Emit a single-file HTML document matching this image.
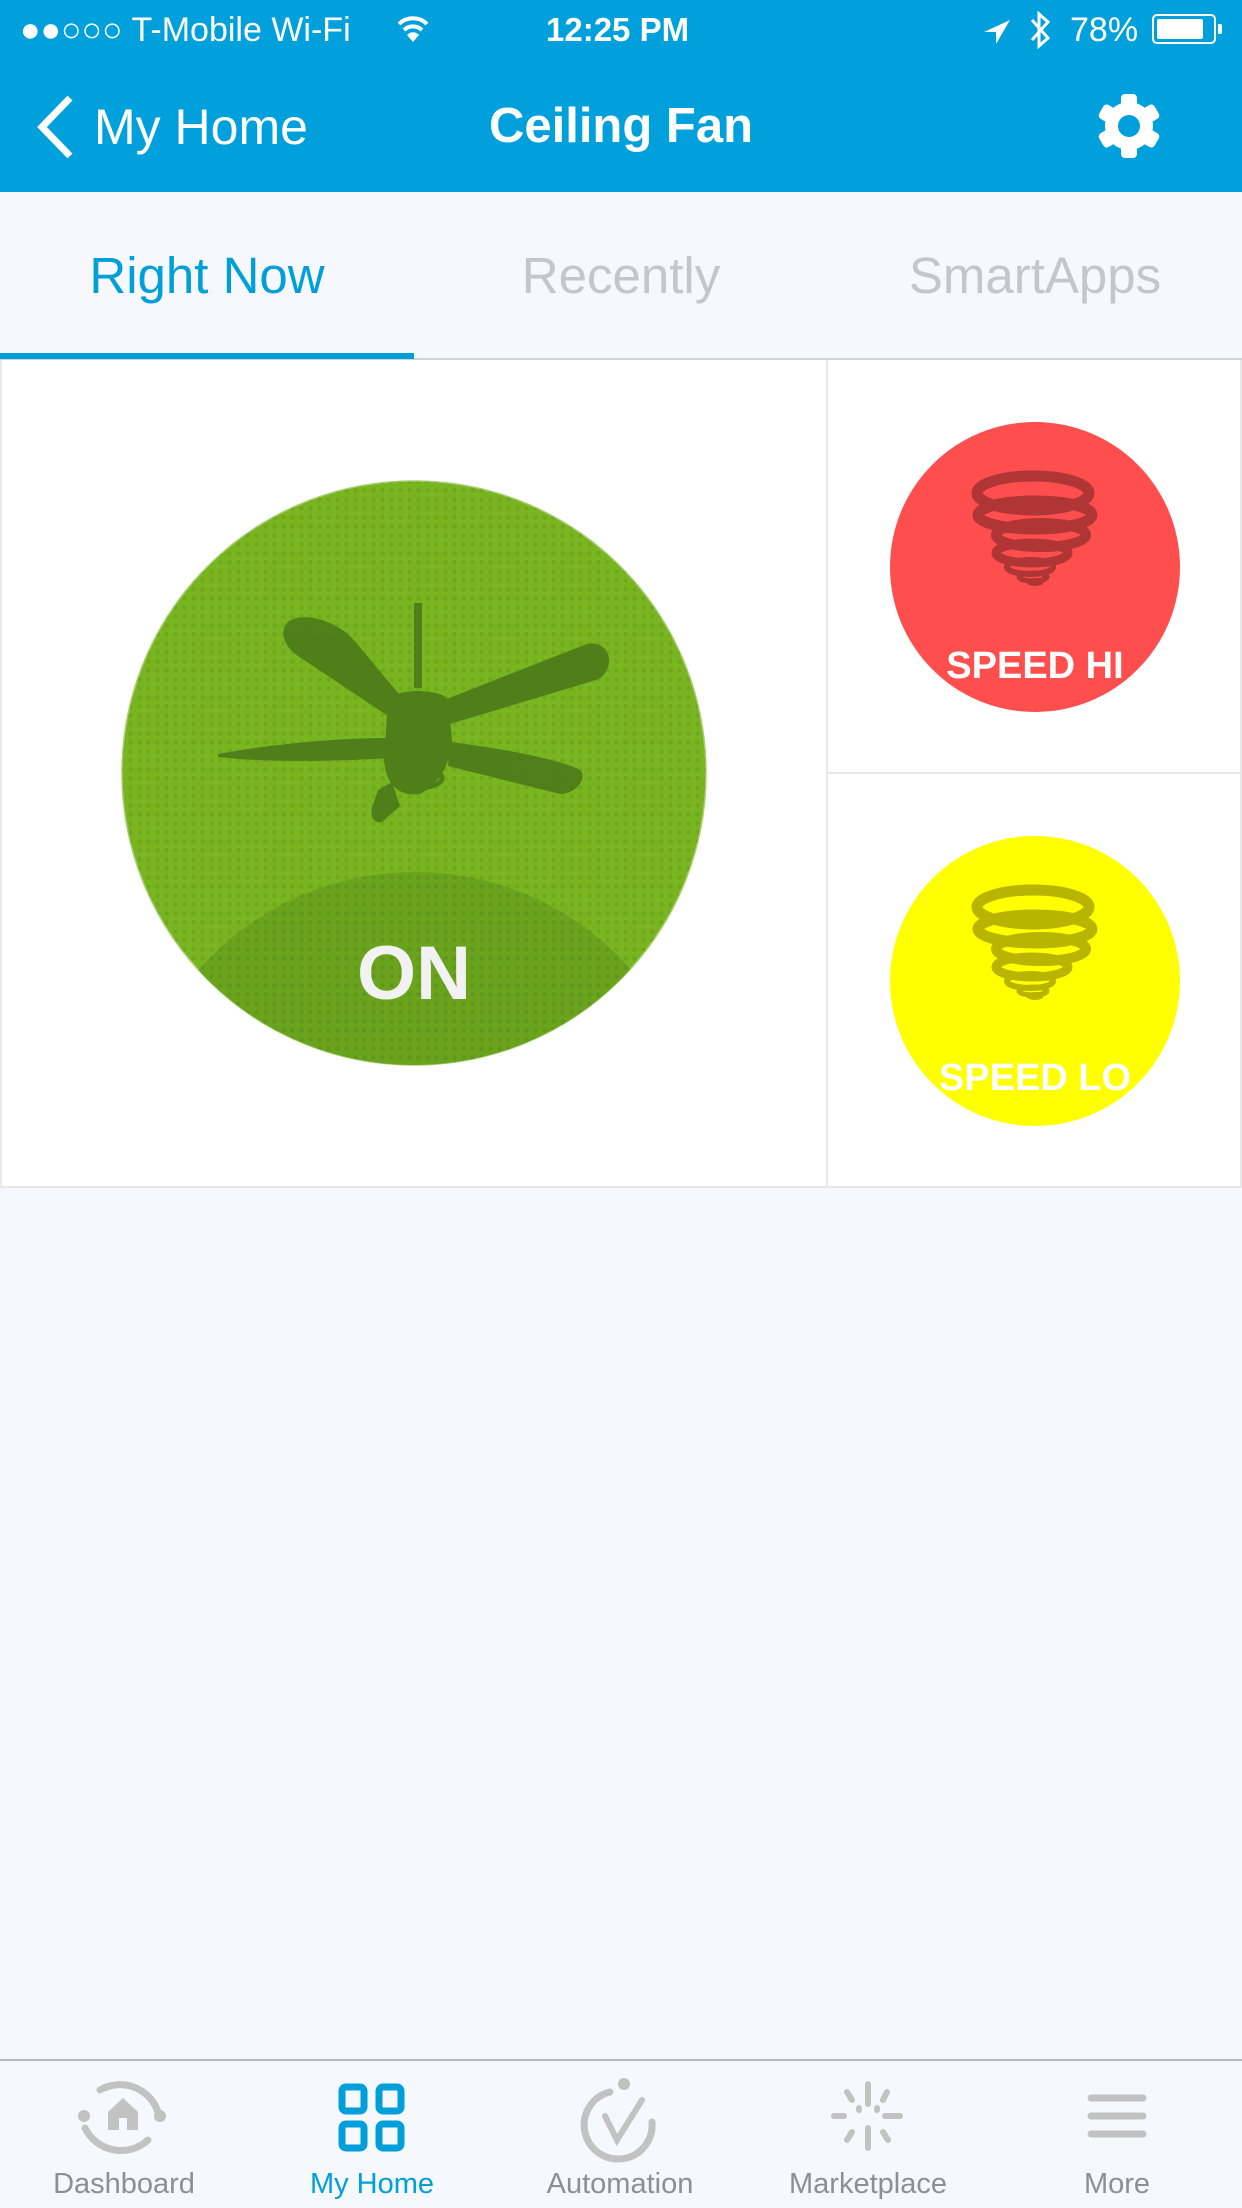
<!DOCTYPE html>
<html><head><meta charset="utf-8">
<style>
*{margin:0;padding:0;box-sizing:border-box}
body{width:1242px;height:2208px;overflow:hidden;background:#f6f8fd;font-family:"Liberation Sans",sans-serif;position:relative}
.abs{position:absolute}
.top{left:0;top:0;width:1242px;height:192px;background:#00a0dc;color:#fff}
.st{font-size:34px;top:11px;white-space:nowrap}
.tab{top:246px;width:414px;text-align:center;font-size:51px;color:#c4c6ca}
.lbl{top:2168px;width:248px;text-align:center;font-size:29px;color:#8e8e93}
</style></head><body>
<div class="abs top">
  <div class="abs st" style="left:20px">●●○○○ T-Mobile Wi-Fi</div>
  <svg class="abs" style="left:396px;top:14px" width="34" height="32" viewBox="0 0 34 32"><path d="M3 10 A20 20 0 0 1 31 10" stroke="#fff" stroke-width="4" fill="none"/><path d="M8 16 A13 13 0 0 1 26 16" stroke="#fff" stroke-width="4" fill="none"/><path d="M17 28 L11 21 A8 8 0 0 1 23 21 Z" fill="#fff"/></svg>
  <div class="abs st" style="left:546px;font-weight:bold;font-size:33px">12:25 PM</div>
  <svg class="abs" style="left:982px;top:18px" width="30" height="28" viewBox="0 0 30 28"><path d="M28 2 L2 14 L14 14 L14 26 Z" fill="#fff"/></svg>
  <svg class="abs" style="left:1028px;top:10px" width="24" height="40" viewBox="0 0 24 40"><path d="M4 10 L20 28 L11 36 L11 4 L20 12 L4 30" stroke="#fff" stroke-width="3" fill="none"/></svg>
  <div class="abs st" style="left:1070px">78%</div>
  <div class="abs" style="left:1152px;top:14px;width:64px;height:30px;border:2px solid #fff;border-radius:5px"><div style="margin:3px;width:46px;height:20px;background:#fff;border-radius:2px"></div></div>
  <div class="abs" style="left:1218px;top:24px;width:4px;height:10px;background:#fff;border-radius:0 2px 2px 0"></div>
  <svg class="abs" style="left:34px;top:94px" width="44" height="66" viewBox="0 0 44 66"><path d="M36 4 L8 33 L36 62" stroke="#fff" stroke-width="7" fill="none"/></svg>
  <div class="abs" style="left:94px;top:98px;font-size:50px">My Home</div>
  <div class="abs" style="left:0;width:1242px;text-align:center;top:98px;font-size:49px;font-weight:bold">Ceiling Fan</div>
  <svg class="abs" style="left:1096px;top:93px" width="66" height="66" viewBox="-33 -33 66 66">
    <g fill="#fff"><circle r="24"/>
    <rect x="-8" y="-32" width="16" height="64" rx="4"/>
    <rect x="-8" y="-32" width="16" height="64" rx="4" transform="rotate(60)"/>
    <rect x="-8" y="-32" width="16" height="64" rx="4" transform="rotate(120)"/></g>
    <circle r="11" fill="#00a0dc"/>
  </svg>
</div>
<div class="abs tab" style="left:0;color:#009fda">Right Now</div>
<div class="abs tab" style="left:414px">Recently</div>
<div class="abs tab" style="left:828px">SmartApps</div>
<div class="abs" style="left:0;top:358px;width:1242px;height:2px;background:#d0d3da"></div>
<div class="abs" style="left:0;top:353px;width:414px;height:6px;background:#009fda"></div>

<div class="abs" style="left:0;top:360px;width:1242px;height:828px;background:#fff;border:2px solid #e8e8ea;border-top:none"></div>
<div class="abs" style="left:826px;top:360px;width:2px;height:828px;background:#e8e8ea"></div>
<div class="abs" style="left:826px;top:772px;width:416px;height:2px;background:#e8e8ea"></div>

<svg class="abs" style="left:0;top:0" width="1242" height="1200" viewBox="0 0 1242 1200">
  <defs>
    <clipPath id="c"><circle cx="414" cy="773" r="292"/></clipPath>
    <pattern id="dots" width="9" height="9" patternUnits="userSpaceOnUse"><circle cx="4.5" cy="4.5" r="2.2" fill="#000" opacity="0.08"/></pattern>
    <g id="tor" fill="none" stroke-linecap="round">
      <ellipse cx="-2" cy="-74" rx="56" ry="17" stroke-width="11"/>
      <ellipse cx="0" cy="-52" rx="57" ry="14" stroke-width="11"/>
      <ellipse cx="6" cy="-32" rx="45" ry="12" stroke-width="10"/>
      <ellipse cx="-3" cy="-14" rx="36" ry="10" stroke-width="9"/>
      <ellipse cx="-5" cy="0" rx="23" ry="7" stroke-width="6"/>
      <ellipse cx="-2" cy="10" rx="14" ry="4" stroke-width="5"/>
      <ellipse cx="0" cy="15" rx="7" ry="2.5" stroke-width="3"/>
    </g>
  </defs>
  <circle cx="414" cy="773" r="292" fill="#78b520" stroke="#a8cf70" stroke-width="1.5"/>
  <g clip-path="url(#c)">
    <circle cx="415" cy="1160" r="288" fill="#6aa31e"/>
    <rect x="120" y="480" width="590" height="590" fill="url(#dots)"/>
  </g>
  <g fill="#4c7a1a" opacity="0.9">
    <rect x="414" y="603" width="8" height="85"/>
    <path d="M288 622 C300 612 332 618 352 638 L404 700 L388 716 L298 656 C282 645 280 630 288 622Z"/>
    <path d="M604 648 C614 658 608 676 596 680 L450 724 L444 700 L584 645 C592 642 598 643 604 648Z"/>
    <path d="M218 754 C260 746 330 738 388 738 L390 758 C330 762 260 762 218 757Z"/>
    <path d="M450 742 C500 748 562 760 580 770 C588 778 576 794 560 794 L448 766Z"/>
    <path d="M378 790 L392 782 L400 806 L382 822 C374 824 370 816 372 808Z"/>
    <path d="M388 700 C394 688 442 688 448 700 L452 740 C450 762 442 782 420 794 C398 797 386 784 384 760Z"/>
    <ellipse cx="418" cy="778" rx="24" ry="10" fill="none" stroke="#4c7a1a" stroke-width="5"/>
  </g>
  <text x="414" y="999" text-anchor="middle" font-family="Liberation Sans" font-weight="bold" font-size="76" fill="#f2f2f2">ON</text>

  <circle cx="1035" cy="567" r="145" fill="#ff4e4e"/>
  <use href="#tor" x="1035" y="567" stroke="#b03535"/>
  <text x="1035" y="678" text-anchor="middle" font-family="Liberation Sans" font-weight="bold" font-size="38" fill="#fff">SPEED HI</text>

  <circle cx="1035" cy="981" r="145" fill="#ffff00"/>
  <use href="#tor" x="1035" y="981" stroke="#b8b400"/>
  <text x="1035" y="1090" text-anchor="middle" font-family="Liberation Sans" font-weight="bold" font-size="38" fill="#fff">SPEED LO</text>
</svg>

<div class="abs" style="left:0;top:2059px;width:1242px;height:149px;background:#f5f8fd;border-top:2px solid #b5b7bb"></div>
<svg class="abs" style="left:0;top:2070px" width="1242" height="100" viewBox="0 2070 1242 100">
  <g fill="none" stroke="#c2c2c2" stroke-width="7" stroke-linecap="round">
    <path d="M100 2090 A40 40 0 0 1 158 2112"/>
    <path d="M148 2140 A40 40 0 0 1 85 2128"/>
  </g>
  <circle cx="160" cy="2116" r="6" fill="#c2c2c2"/><circle cx="84" cy="2116" r="6" fill="#c2c2c2"/>
  <path d="M108 2130 L108 2112 L123 2098 L138 2112 L138 2130 L127 2130 L127 2118 L119 2118 L119 2130Z" fill="#c2c2c2"/>
  <g fill="none" stroke="#009fda" stroke-width="7"><rect x="342" y="2087" width="22" height="24" rx="4"/><rect x="379" y="2087" width="22" height="24" rx="4"/><rect x="342" y="2124" width="22" height="24" rx="4"/><rect x="379" y="2124" width="22" height="24" rx="4"/></g>
  <path d="M610 2092 A34 34 0 1 0 652 2122" fill="none" stroke="#c2c2c2" stroke-width="7" stroke-linecap="round"/>
  <circle cx="624" cy="2084" r="6" fill="#c2c2c2"/>
  <path d="M605 2116 L617 2140 L642 2100" fill="none" stroke="#c2c2c2" stroke-width="6" stroke-linecap="round"/>
  <g stroke="#c2c2c2" stroke-width="6" stroke-linecap="round">
    <line x1="868" y1="2084" x2="868" y2="2104"/><line x1="868" y1="2128" x2="868" y2="2148"/>
    <line x1="834" y1="2116" x2="844" y2="2116"/><line x1="885" y1="2116" x2="900" y2="2116"/>
    <line x1="847" y1="2092" x2="852" y2="2100"/><line x1="887" y1="2092" x2="883" y2="2100"/>
    <line x1="852" y1="2132" x2="847" y2="2140"/><line x1="883" y1="2132" x2="888" y2="2140"/>
    <line x1="859" y1="2108" x2="859" y2="2110"/><line x1="877" y1="2108" x2="877" y2="2110"/>
  </g>
  <g stroke="#c2c2c2" stroke-width="7" stroke-linecap="round"><line x1="1091" y1="2098" x2="1143" y2="2098"/><line x1="1091" y1="2116" x2="1143" y2="2116"/><line x1="1091" y1="2134" x2="1143" y2="2134"/></g>
</svg>
<div class="abs lbl" style="left:0">Dashboard</div>
<div class="abs lbl" style="left:248px;color:#009fda">My Home</div>
<div class="abs lbl" style="left:496px">Automation</div>
<div class="abs lbl" style="left:744px">Marketplace</div>
<div class="abs lbl" style="left:993px">More</div>
</body></html>
